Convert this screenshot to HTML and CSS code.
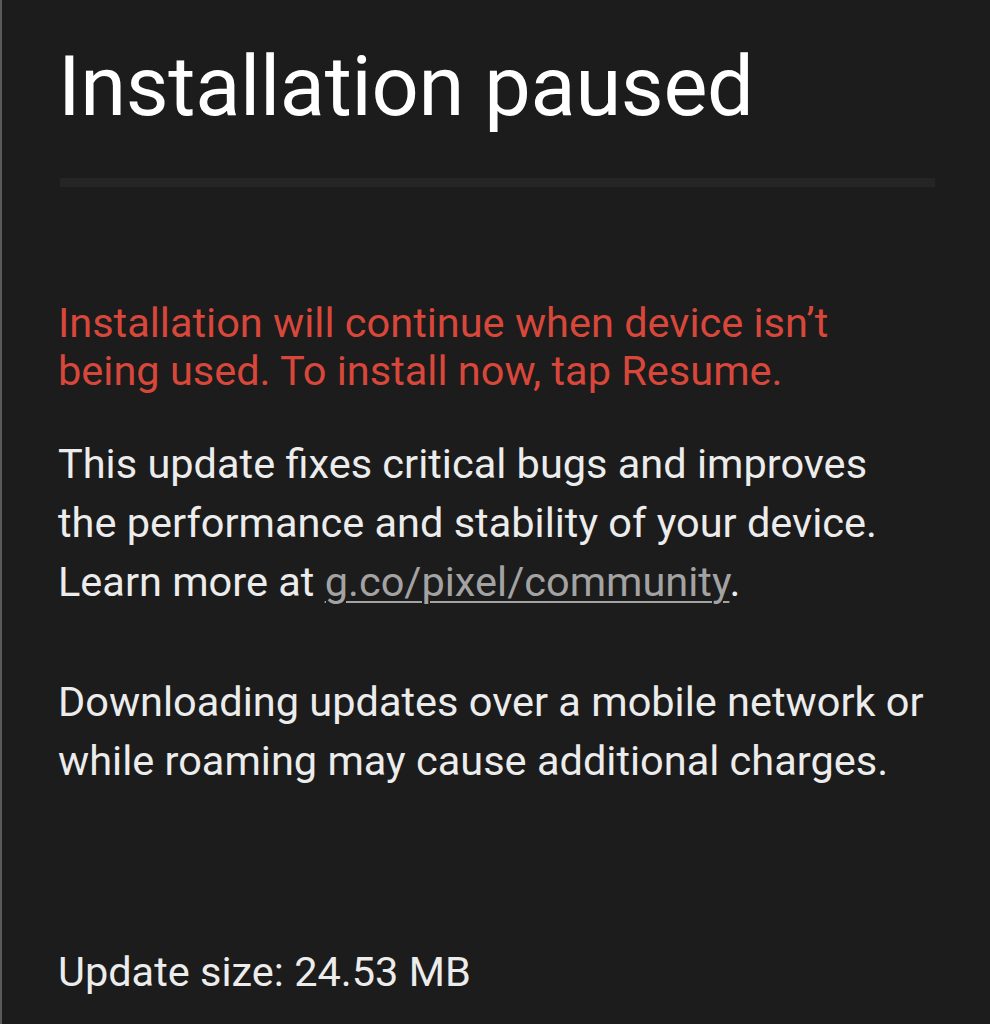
FILE: index.html
```html
<!DOCTYPE html>
<html>
<head>
<meta charset="utf-8">
<link rel="stylesheet" href="styles.css">
</head>
<body>
<main class="screen">
  <h1 class="title">Installation paused</h1>
  <div class="divider"></div>
  <p class="warning">Installation will continue when device isn’t<br>being used. To install now, tap Resume.</p>
  <p class="body">This update fixes critical bugs and improves<br>the performance and stability of your device.<br>Learn more at <a class="link" href="#">g.co/pixel/community</a>.</p>
  <p class="body second">Downloading updates over a mobile network or<br>while roaming may cause additional charges.</p>
  <p class="body size">Update size: 24.53 MB</p>
</main>
</body>
</html>
```
FILE: styles.css
```css
html, body {
  margin: 0;
  padding: 0;
  background: #1c1c1c;
}
.screen {
  box-sizing: border-box;
  width: 990px;
  height: 1024px;
  overflow: hidden;
  background: #1c1c1c;
  border-left: 2px solid #5a5a5a;
  padding: 37px 55px 0 56px;
  font-family: Roboto, "Liberation Sans", sans-serif;
}
.title {
  margin: 0;
  font-size: 83px;
  line-height: 100px;
  font-weight: 400;
  color: #ffffff;
  letter-spacing: -0.3px;
}
.divider {
  margin: 41px 0 0 2px;
  height: 9px;
  background: #252525;
}
.warning {
  margin: 112px 0 0;
  font-size: 41.5px;
  line-height: 48px;
  color: #d9473a;
}
.body {
  margin: 38.6px 0 0;
  font-size: 41.5px;
  line-height: 59px;
  color: #ececec;
}
.second {
  margin-top: 61px;
}
.size {
  margin-top: 152px;
}
.link {
  color: #a3a3a3;
  text-decoration: underline;
  text-decoration-thickness: 2px;
  text-underline-offset: 5px;
}
```
